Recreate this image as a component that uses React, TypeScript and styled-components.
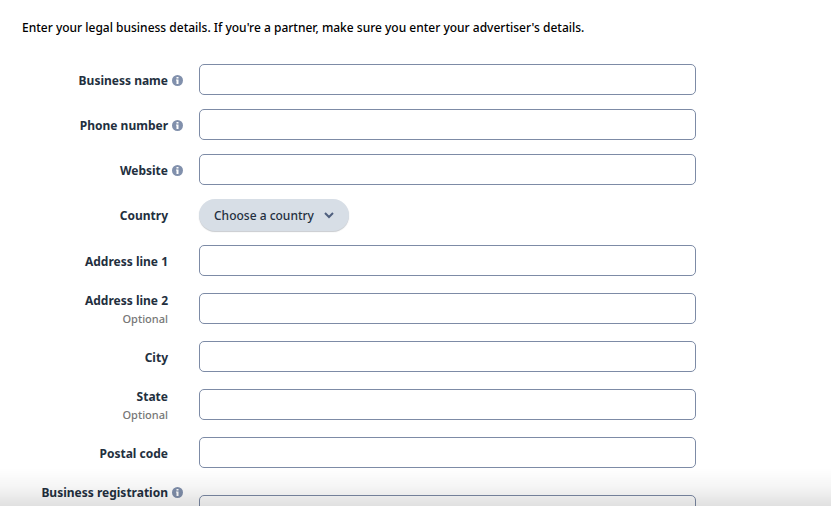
import React from "react";
import styled, { createGlobalStyle } from "styled-components";

const GlobalStyle = createGlobalStyle`
  * { box-sizing: border-box; }
  body {
    margin: 0;
    background: #fff;
    color: #0f1111;
    font-family: "Noto Sans", "Open Sans", sans-serif;
    font-size: 12px;
    font-weight: 500;
  }
`;

const Page = styled.main`
  height: 100vh;
  overflow: hidden;
  padding: 18px 22px 0;
`;

const Intro = styled.p`
  margin: 0 0 27px;
  line-height: 19px;
  color: #000;
`;

const Form = styled.form`
  display: flex;
  flex-direction: column;
  gap: 14px;
`;

const Row = styled.div<{ $tall?: boolean }>`
  display: grid;
  grid-template-columns: 146px 15px minmax(0, 497px);
  align-items: center;
  min-height: ${(p) => (p.$tall ? "57px" : "31px")};
`;

const Label = styled.label<{ $top?: boolean; $stacked?: boolean }>`
  display: flex;
  flex-direction: column;
  align-self: ${(p) => (p.$top ? "start" : "center")};
  padding-top: ${(p) => (p.$top || p.$stacked ? "1px" : "2px")};
  text-align: right;
  white-space: nowrap;
  font-weight: 700;
  line-height: 20px;
  color: #232f3e;
`;

const Optional = styled.span`
  font-size: 11px;
  font-weight: 500;
  line-height: 16px;
  color: #767676;
`;

const InfoButton = styled.button<{ $top?: boolean }>`
  display: flex;
  align-items: center;
  justify-content: flex-end;
  align-self: ${(p) => (p.$top ? "start" : "center")};
  height: ${(p) => (p.$top ? "20px" : "21px")};
  padding: ${(p) => (p.$top ? "0" : "1px 0 0")};
  border: 0;
  background: none;
`;

const Control = styled.div`
  display: flex;
  grid-column: 3;
  margin-left: 16px;
  margin-right: -16px;
`;

const TextInput = styled.input`
  width: 100%;
  height: 31px;
  padding: 0 10px;
  border: 1px solid #7d8ba6;
  border-radius: 5px;
  background: #fff;
  font: inherit;
`;

const SelectWrap = styled.div`
  position: relative;
  color: #4f5f7e;
`;

const Select = styled.select`
  appearance: none;
  display: block;
  width: 150px;
  height: 32px;
  padding: 0 30px 0 15px;
  border: 0;
  border-radius: 16px;
  background: #d7dee6;
  box-shadow: 0 1px 1px rgba(35, 47, 62, 0.25);
  color: #232f3e;
  font: inherit;
`;

const Chevron = styled.svg`
  position: absolute;
  right: 15px;
  top: 12px;
  pointer-events: none;
`;

const BottomFade = styled.div`
  position: fixed;
  inset: auto 0 0;
  height: 38px;
  background: linear-gradient(rgba(0, 0, 0, 0), rgba(0, 0, 0, 0.04) 50%, rgba(0, 0, 0, 0.12));
  pointer-events: none;
`;

const InfoIcon = () => (
  <svg width="11" height="11" viewBox="0 0 22 22" aria-hidden="true">
    <circle cx="11" cy="11" r="11" fill="#8190ac" />
    <path d="M9 4h4v3H9zM8 9h5v9H9v-7H8z" fill="#fff" />
  </svg>
);

type Field = {
  id: string;
  label: string;
  info?: boolean;
  optional?: boolean;
  top?: boolean;
  select?: boolean;
};

const fields: Field[] = [
  { id: "business-name", label: "Business name", info: true },
  { id: "phone", label: "Phone number", info: true },
  { id: "website", label: "Website", info: true },
  { id: "country", label: "Country", select: true },
  { id: "address1", label: "Address line 1" },
  { id: "address2", label: "Address line 2", optional: true },
  { id: "city", label: "City" },
  { id: "state", label: "State", optional: true },
  { id: "postal", label: "Postal code" },
  { id: "registration", label: "Business registration", info: true, top: true },
];

const CountrySelect = ({ id }: { id: string }) => (
  <SelectWrap>
    <Select id={id}>
      <option>Choose a country</option>
    </Select>
    <Chevron width="10" height="8" viewBox="0 0 10 8" aria-hidden="true">
      <path d="M1 2l4 4 4-4" fill="none" stroke="currentColor" strokeWidth="2" />
    </Chevron>
  </SelectWrap>
);

export default function App() {
  return (
    <Page>
      <GlobalStyle />
      <Intro>
        Enter your legal business details. If you're a partner, make sure you
        enter your advertiser's details.
      </Intro>
      <Form>
        {fields.map((f) => (
          <Row key={f.id} $tall={f.top}>
            <Label htmlFor={f.id} $top={f.top} $stacked={f.optional}>
              {f.label}
              {f.optional && <Optional>Optional</Optional>}
            </Label>
            {f.info && (
              <InfoButton type="button" aria-label={`About ${f.label}`} $top={f.top}>
                <InfoIcon />
              </InfoButton>
            )}
            <Control>
              {f.select ? <CountrySelect id={f.id} /> : <TextInput id={f.id} type="text" />}
            </Control>
          </Row>
        ))}
      </Form>
      <BottomFade />
    </Page>
  );
}
